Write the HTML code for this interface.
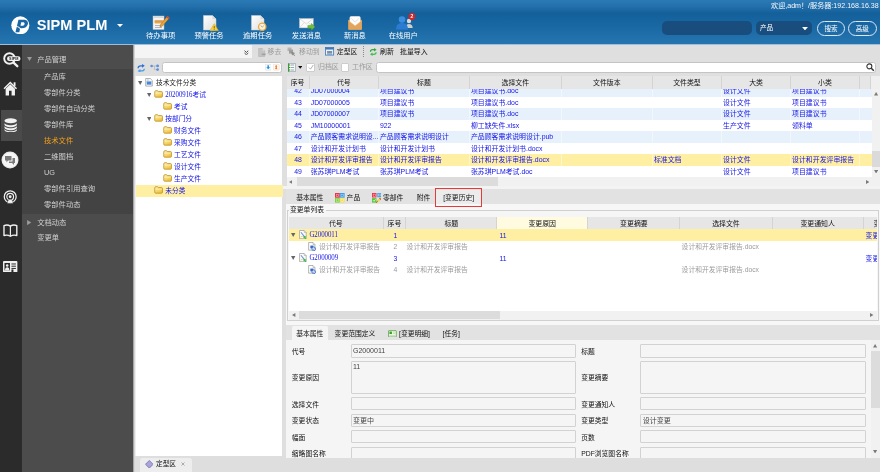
<!DOCTYPE html>
<html lang="zh-CN">
<head>
<meta charset="utf-8">
<title>SIPM PLM</title>
<style>
*{box-sizing:border-box;margin:0;padding:0}
html,body{width:880px;height:472px;overflow:hidden}
body{will-change:transform;position:relative;background:#dfdfdf;font-family:"Liberation Sans","Noto Sans CJK SC",sans-serif;font-size:6.5px;color:#222;line-height:1}
.abs{position:absolute}
a{text-decoration:none;color:inherit}
/* ---------- header ---------- */
#hdr{position:absolute;left:0;top:0;width:880px;height:44px;background:linear-gradient(#2b79b5 0%,#2370ac 14%,#13609b 30%,#1a68a3 60%,#2575b0 100%)}
#hdrline{position:absolute;left:0;top:44px;width:880px;height:1px;background:#9dbfdc}
#title{position:absolute;left:36.8px;top:17.8px;font-size:14.6px;font-weight:bold;color:#fff;letter-spacing:0;white-space:nowrap}
.tb{position:absolute;top:31.5px;width:48.5px;text-align:center;color:#fff;font-size:7.3px;white-space:nowrap}
.tbi{position:absolute;top:15px}
#welcome{position:absolute;right:1.3px;top:2.8px;color:#f4f8fc;font-size:7.1px;white-space:nowrap}
.pill{position:absolute;top:21.3px;height:14.2px;background:#194d7e;border-radius:5px}
.obtn{position:absolute;top:20.6px;height:15.4px;border:0.5px solid #dbe7f2;border-radius:8px;color:#fff;font-size:6.6px;text-align:center;line-height:14px}
/* ---------- sidebar ---------- */
#icol{position:absolute;left:0;top:45px;width:22px;height:427px;background:#2b2b2b}
#menu{position:absolute;left:22px;top:45px;width:111px;height:427px;background:#4c4c4c}
#sub{position:absolute;left:0;top:24px;width:111px;height:144.7px;background:#434343}
.mg{position:absolute;left:15.2px;color:#d0d0d0;font-size:7.3px;white-space:nowrap}
.mi{position:absolute;left:22px;color:#d0d0d0;font-size:7.3px;white-space:nowrap}
#shadow{position:absolute;left:133px;top:45px;width:2px;height:427px;background:linear-gradient(90deg,#8f8f8f,#ececec)}
/* ---------- tree panel ---------- */
#tp1{position:absolute;left:135px;top:45px;width:117px;height:13px;background:#f5f5f5}
.inp{position:absolute;background:#fff;border:0.6px solid #c4c4c4;border-radius:2.5px}
#tree{position:absolute;left:135.5px;top:75.8px;width:146.9px;height:380.6px;background:#fff;box-shadow:-0.5px 0 0 #fff}
.tn{position:absolute;white-space:nowrap;font-family:"Liberation Serif","Noto Sans CJK SC",serif;font-size:6.7px;color:#1010e8}
.tsel{position:absolute;left:0;width:147.4px;height:11.8px;background:#ffefa3}
#bbar{position:absolute;left:135px;top:456.4px;width:745px;height:15.6px;background:#dedede}
#btab{position:absolute;left:140px;top:458px;width:52px;height:14px;background:#ededed;border-radius:2.5px 2.5px 0 0}
/* ---------- toolbars ---------- */
.t1{position:absolute;top:49.3px;font-size:6.9px;white-space:nowrap;color:#111}
.dis{color:#9a9a9a}
/* ---------- grid 1 ---------- */
#g1{position:absolute;left:286.5px;top:76.3px;width:593.5px;height:110px;background:#fff;overflow:hidden}
.gh{position:absolute;z-index:3;top:0;height:12.4px;background:#e6e6e6;border-right:0.6px solid #d4d4d4;text-align:center;font-size:6.9px;line-height:14.2px;color:#111;white-space:nowrap;overflow:hidden}
.gr{position:absolute;left:0;width:585px;height:11.5px}
.gr.alt{background:#e7f1fc}
.gr.sel{background:#ffefa3}
.gc{position:absolute;top:0;height:11.5px;line-height:12.4px;font-size:6.9px;color:#1414e6;white-space:nowrap;overflow:hidden;padding-left:1px;border-right:0.5px solid rgba(255,255,255,.45)}
.sbv{position:absolute;background:#f1f1f1}
/* ---------- tabs / fieldset / grid2 / form ---------- */
#lightband{position:absolute;left:283px;top:186.3px;width:597px;height:2.4px;background:#f3f3f3}
#tabs1{position:absolute;left:286px;top:188.6px;width:594px;height:15.2px;background:#e2e2e2}
.tl{position:absolute;font-size:6.8px;white-space:nowrap;color:#111}
#fs{position:absolute;left:286px;top:203.8px;width:594px;height:121.4px;background:#f7f7f7}
#fsb{position:absolute;left:287px;top:210.4px;width:591.6px;height:110.4px;border:0.6px solid #d0d0d0;background:#f6f6f6}
#g2{position:absolute;left:289px;top:216.8px;width:588px;height:103px;background:#fff;overflow:hidden}
.g2c{position:absolute;font-size:6.8px;white-space:nowrap}
.ser{font-family:"Liberation Serif","Noto Sans CJK SC",serif;font-size:6.9px;letter-spacing:-0.04px;transform:scaleY(1.12);transform-origin:0 55%}
#tabs2{position:absolute;left:286px;top:325.2px;width:594px;height:15px;background:#e2e2e2}
#form{position:absolute;left:286px;top:340.2px;width:594px;height:117.6px;background:#f5f5f5;overflow:hidden}
.fl{position:absolute;font-size:6.8px;color:#111;white-space:nowrap}
.ff{position:absolute;background:#f5f5f5;border:0.7px solid #d2d2d2;border-radius:1px;font-size:7px;color:#444;padding:0 0 0 1.4px;white-space:nowrap}
</style>
</head>
<body>
<svg width="0" height="0" style="position:absolute"><defs><linearGradient id="fg" x1="0" y1="0" x2="0.6" y2="1"><stop offset="0" stop-color="#fff3b8"/><stop offset="1" stop-color="#efc23c"/></linearGradient></defs></svg>
<!-- HEADER -->
<div id="hdr"></div>
<div id="hdrline"></div>
<div id="title">SIPM PLM</div>
<!-- logo -->
<svg class="abs" style="left:11.4px;top:15.8px" width="18.6" height="18.6" viewBox="0 0 40 40">
<circle cx="20" cy="20" r="19.4" fill="#fff"/>
<path d="M16 8 H27 C34.5 8 37.5 12 36.4 17.4 C35.2 23.4 30 26.4 23 26.4 H19.8 L17.8 35 H9.6 Z M22 13.6 L20.4 20.8 H24 C27 20.8 28.8 19.2 29.2 17 C29.6 14.8 28.2 13.6 25.6 13.6 Z" fill="#1b66a4" fill-rule="evenodd"/>
<path d="M2 25 C8 20.5 15 21.5 21 27.5" stroke="#fff" stroke-width="2.2" fill="none"/>
</svg>
<svg class="abs" style="left:116.6px;top:24.3px" width="6" height="3.2" viewBox="0 0 12 6"><path d="M0 0H12L6 6Z" fill="#fff"/></svg>
<!-- toolbar: 待办事项 -->
<svg class="tbi" style="left:152px" width="18" height="15" viewBox="0 0 36 30">
<rect x="2" y="2" width="22" height="27" fill="#f4f4f4" stroke="#b9b9b9" stroke-width="1"/>
<rect x="2" y="2" width="22" height="4" fill="#d9d9d9"/>
<rect x="5" y="10" width="19" height="7" rx="2" fill="#f5a847"/>
<path d="M6 21H20M6 25H20M6 13.5H20" stroke="#9a9a9a" stroke-width="1.4"/>
<path d="M31 2 L35 6 L21 22 L16 24 L17.5 18.5 Z" fill="#e7a23a" stroke="#8a5a1a" stroke-width="0.8"/>
<path d="M31 2 L35 6 L33 8.3 L29 4.3Z" fill="#d8453a"/>
</svg>
<div class="tb" style="left:136.4px">待办事项</div>
<!-- 预警任务 -->
<svg class="tbi" style="left:202.5px;top:14.6px" width="16" height="16" viewBox="0 0 32 32">
<defs><linearGradient id="pg1" x1="0" y1="0" x2="1" y2="1"><stop offset="0" stop-color="#ffffff"/><stop offset="1" stop-color="#dedede"/></linearGradient></defs>
<path d="M1 1H19L26 8V30H1Z" fill="url(#pg1)" stroke="#cfcfcf" stroke-width="1"/>
<path d="M19 1V8H26Z" fill="#d8d8d8"/>
<path d="M22.5 17.5 L31 31.4 H14 Z" fill="#f8cf3a" stroke="#d2a21f" stroke-width="1"/>
<path d="M22.5 22V27M22.5 28.4V29.8" stroke="#6a5200" stroke-width="1.6"/>
</svg>
<div class="tb" style="left:184.8px">预警任务</div>
<!-- 逾期任务 -->
<svg class="tbi" style="left:251px;top:14.6px" width="16" height="16" viewBox="0 0 32 32">
<path d="M1 1H19L26 8V30H1Z" fill="url(#pg1)" stroke="#cfcfcf" stroke-width="1"/>
<path d="M19 1V8H26Z" fill="#d8d8d8"/>
<circle cx="22.5" cy="23.5" r="7.4" fill="#fbf3e2" stroke="#e7a83e" stroke-width="2.6"/>
<path d="M19.6 21L22.5 24.4L25.6 21.4" stroke="#a08a6a" stroke-width="1.5" fill="none"/>
</svg>
<div class="tb" style="left:233.4px">逾期任务</div>
<!-- 发送消息 -->
<svg class="tbi" style="left:298.8px;top:17.6px" width="16.2" height="12.4" viewBox="0 0 33 25">
<rect x="1" y="1" width="28" height="19" fill="#fbfbfb" stroke="#c4c4c4" stroke-width="1"/>
<path d="M1 1L15 12L29 1M1 20L11 9M29 20L19 9" stroke="#c4c4c4" stroke-width="1" fill="none"/>
<path d="M18 15H25V11L33 18L25 25V21H18Z" fill="#6fbf3b" stroke="#3f8a1c" stroke-width="0.8"/>
</svg>
<div class="tb" style="left:282.2px">发送消息</div>
<!-- 新消息 -->
<svg class="tbi" style="left:347.9px;top:16.2px" width="14.2" height="14" viewBox="0 0 30 30">
<rect x=".5" y="8" width="29" height="21.5" rx="1.5" fill="#c58a44"/>
<rect x="3.6" y=".6" width="22.8" height="22" rx="3.4" fill="#fdfdfd" stroke="#d9d9d9" stroke-width=".8"/>
<path d="M6.5 5L15 13L23.5 5" stroke="#d4d4d4" stroke-width="1.4" fill="none"/>
<path d="M.5 9.6L15 21L29.5 9.6V28C29.5 28.8 28.8 29.5 28 29.5H2C1.2 29.5 .5 28.8 .5 28Z" fill="#e2a55d"/>
<path d="M.5 9.6L15 21L29.5 9.6" stroke="#efc48e" stroke-width="1" fill="none"/>
</svg>
<div class="tb" style="left:330.6px">新消息</div>
<!-- 在线用户 -->
<svg class="tbi" style="left:395px;top:13px" width="20" height="17" viewBox="0 0 40 34">
<circle cx="28" cy="16" r="4.4" fill="#dcdcdc"/>
<path d="M21 30C21 24.5 24 22 28 22C32 22 35.4 24.5 35.4 30Z" fill="#cfcfcf"/>
<circle cx="14" cy="13" r="6.5" fill="#3c8de0"/>
<path d="M2 33C2 24 7 20 14 20C21 20 26 24 26 33Z" fill="#2a7bd4"/>
<circle cx="34" cy="7" r="6.8" fill="#e02020"/>
<text x="34" y="10.6" font-size="10" font-weight="bold" fill="#fff" text-anchor="middle" font-family="Liberation Sans, sans-serif">2</text>
</svg>
<div class="tb" style="left:379px">在线用户</div>
<!-- right side -->
<div id="welcome">欢迎,adm！/服务器:192.168.16.38</div>
<div class="pill" style="left:662.4px;width:90px"></div>
<div class="pill" style="left:756px;width:56.4px"></div>
<div class="abs" style="left:760px;top:25.2px;color:#fff;font-size:6.6px">产品</div>
<svg class="abs" style="left:802px;top:27px" width="6" height="3.4" viewBox="0 0 12 7"><path d="M0 0H12L6 7Z" fill="#fff"/></svg>
<div class="obtn" style="left:817px;width:28px">搜索</div>
<div class="obtn" style="left:848px;width:28.6px">高级</div>
<!-- SIDEBAR -->
<div id="icol">
<div class="abs" style="left:1px;top:65px;width:21px;height:30.5px;background:#4a4a4a"></div>
<!-- magnifier SIPM (center y 60 abs => 15 rel) -->
<svg class="abs" style="left:2.5px;top:6.5px" width="18" height="16" viewBox="0 0 36 32">
<circle cx="13" cy="13" r="10.6" fill="none" stroke="#f2f2f2" stroke-width="3.8"/>
<path d="M21 21.4L28.6 28.4" stroke="#f2f2f2" stroke-width="4.6" stroke-linecap="round"/>
<rect x="8" y="8.6" width="27" height="9.6" rx="4.8" fill="#f2f2f2"/>
<text x="21.5" y="16.3" font-size="7.6" font-weight="bold" fill="#2b2b2b" text-anchor="middle" font-family="Liberation Sans, sans-serif">SIPM</text>
</svg>
<!-- home: abs y 82-96 -->
<svg class="abs" style="left:3.3px;top:36.3px" width="14.6" height="15" viewBox="0 0 28 29">
<path d="M14 1L27 14L25 16L14 5L3 16L1 14Z" fill="#f2f2f2"/>
<path d="M5 15L14 6.4L23 15V28H16.5V19H11.5V28H5Z" fill="#f2f2f2"/>
<rect x="20.5" y="2.5" width="3.6" height="7" fill="#f2f2f2"/>
</svg>
<!-- database: abs y 118-132 -->
<svg class="abs" style="left:4.2px;top:73px" width="13.4" height="14.4" viewBox="0 0 27 29">
<ellipse cx="13.5" cy="5.5" rx="12.5" ry="5" fill="#f0f0f0"/>
<path d="M1 9.5C1 12 6 14.5 13.5 14.5C21 14.5 26 12 26 9.5V13C26 15.5 21 18.5 13.5 18.5C6 18.5 1 15.5 1 13Z" fill="#f0f0f0"/>
<path d="M1 15.5C1 18 6 20.5 13.5 20.5C21 20.5 26 18 26 15.5V19C26 21.5 21 24.5 13.5 24.5C6 24.5 1 21.5 1 19Z" fill="#f0f0f0"/>
<path d="M1 21.5C1 24 6 26.5 13.5 26.5C21 26.5 26 24 26 21.5V24C26 26.5 21 28.8 13.5 28.8C6 28.8 1 26.5 1 24Z" fill="#f0f0f0"/>
</svg>
<!-- chat: center abs (10.4,160) r 8.9 -->
<svg class="abs" style="left:1.4px;top:106px" width="18" height="18" viewBox="0 0 36 36">
<circle cx="18" cy="18" r="17" fill="#e9e9e9"/>
<circle cx="18" cy="18" r="14.6" fill="#f6f6f6"/>
<path d="M8 10H21V19H14L11 23V19H8Z" fill="#7a7a7a"/>
<path d="M23 14H28V24H26V28L22 24H16V21H23Z" fill="#7a7a7a"/>
</svg>
<!-- podcast: center abs (10.4,196) -->
<svg class="abs" style="left:3.2px;top:144.6px" width="14.4" height="14.4" viewBox="0 0 30 30">
<circle cx="15" cy="14" r="12.4" fill="none" stroke="#f0f0f0" stroke-width="2.6"/>
<circle cx="15" cy="14" r="7" fill="none" stroke="#f0f0f0" stroke-width="2.4"/>
<circle cx="15" cy="14" r="3" fill="#f0f0f0"/>
<path d="M9 28C9 22 11 19.5 15 19.5C19 19.5 21 22 21 28Z" fill="#f0f0f0" stroke="#2b2b2b" stroke-width="1"/>
</svg>
<!-- book: abs x3.3-17.8 y224.3-237.7 -->
<svg class="abs" style="left:3.2px;top:179px" width="14.8" height="13.6" viewBox="0 0 30 27">
<path d="M2 3C7 1 11 1.5 15 4C19 1.5 23 1 28 3V23C23 21.4 19 22 15 24.6C11 22 7 21.4 2 23Z" fill="none" stroke="#f0f0f0" stroke-width="2.8" stroke-linejoin="round"/>
<path d="M15 4V24.6" stroke="#f0f0f0" stroke-width="2.4"/>
</svg>
<!-- id card: abs x3.3-17.3 y261.2-272.3 -->
<svg class="abs" style="left:3.2px;top:216px" width="14.4" height="11.4" viewBox="0 0 29 23">
<rect x="0" y="0" width="29" height="23" rx="2" fill="#f0f0f0"/>
<rect x="3" y="4" width="11" height="15" fill="#2b2b2b"/>
<circle cx="8.5" cy="9" r="2.6" fill="#f0f0f0"/>
<path d="M4 19C4 14 6 12.5 8.5 12.5C11 12.5 13 14 13 19Z" fill="#f0f0f0"/>
<path d="M17 6H26M17 10.5H26M17 15H26" stroke="#2b2b2b" stroke-width="2"/>
<rect x="17" y="17" width="4" height="6" fill="#2b2b2b"/>
</svg>
</div>
<div id="menu"><div id="sub"></div>
<svg class="abs" style="left:4.6px;top:12.4px" width="5" height="4.2" viewBox="0 0 10 8"><path d="M0 0H10L5 8Z" fill="#9c9c9c"/></svg>
<div class="mg" style="top:10.6px">产品管理</div>
<div class="mi" style="top:28.4px">产品库</div>
<div class="mi" style="top:44.4px">零部件分类</div>
<div class="mi" style="top:60.4px">零部件自动分类</div>
<div class="mi" style="top:76.4px">零部件库</div>
<div class="mi" style="top:92.4px;color:#f3a01c">技术文件</div>
<div class="mi" style="top:108.4px">二维图档</div>
<div class="mi" style="top:124.4px">UG</div>
<div class="mi" style="top:140.4px">零部件引用查询</div>
<div class="mi" style="top:156.4px">零部件动态</div>
<svg class="abs" style="left:5.4px;top:175.2px" width="4.4" height="5.2" viewBox="0 0 8 10"><path d="M0 0L8 5L0 10Z" fill="#9c9c9c"/></svg>
<div class="mg" style="top:174px">文档动态</div>
<div class="mg" style="top:188.6px">变更单</div>
</div>
<div id="shadow"></div>
<!-- TREE PANEL -->
<div id="tp1"></div>
<svg class="abs" style="left:244.4px;top:49.8px" width="4.8" height="5.6" viewBox="0 0 9 10"><path d="M1 1L4.5 4.4L8 1M1 5.4L4.5 8.8L8 5.4" fill="none" stroke="#333" stroke-width="1.7"/></svg>
<svg class="abs" style="left:137.4px;top:63.6px" width="8.4" height="8.8" viewBox="0 0 16 17"><path d="M2 8C2 4.6 4 3.6 7 3.6H10.4" fill="none" stroke="#2f6fd8" stroke-width="2.4"/><path d="M9.6 0L15 3.6L9.6 7.2Z" fill="#2f6fd8"/><path d="M14 9C14 12.4 12 13.4 9 13.4H5.6" fill="none" stroke="#4f9be6" stroke-width="2.4"/><path d="M6.4 9.8L1 13.4L6.4 17Z" fill="#4f9be6"/></svg>
<svg class="abs" style="left:150.4px;top:63.8px" width="9.4" height="7.4" viewBox="0 0 19 15"><path d="M3 4H15M9 4V11.4H15" fill="none" stroke="#a8a8a8" stroke-width="1.2"/><circle cx="3.2" cy="4" r="2.6" fill="#5b8fe0"/><circle cx="15.4" cy="4" r="2.8" fill="#5b8fe0"/><circle cx="15.4" cy="11.4" r="2.8" fill="#5b8fe0"/></svg>
<div class="inp" style="left:162px;top:61.6px;width:120.4px;height:11.6px"></div>
<svg class="abs" style="left:264.6px;top:64.4px" width="6.4" height="6.4" viewBox="0 0 13 13"><rect x=".5" y=".5" width="12" height="12" rx="2" fill="#fff" stroke="#b9cde0"/><path d="M6.5 10.5L2.5 6.5H5V2.5H8V6.5H10.5Z" fill="#1f8fd6"/></svg>
<svg class="abs" style="left:273.4px;top:64.4px" width="6.4" height="6.4" viewBox="0 0 13 13"><rect x=".5" y=".5" width="12" height="12" rx="2" fill="#fff" stroke="#e0c9b9"/><path d="M6.5 1.8L9.6 5H7.8V8H9.6L6.5 11.2L3.4 8H5.2V5H3.4Z" fill="#f47a20"/></svg>
<div id="tree">
<div class="tsel" style="top:109.37px"></div>
<svg class="abs" style="left:2.2px;top:5.10px" width="4.4" height="4" viewBox="0 0 9 8"><path d="M0 0H9L4.5 8Z" fill="#666"/></svg><svg class="abs" style="left:9.6px;top:2.70px" width="8" height="8.6" viewBox="0 0 15 17"><path d="M1 1H10L14 5V16H1Z" fill="#fff" stroke="#8a8a8a" stroke-width="1.3"/><rect x="3.2" y="6.6" width="8.8" height="6.8" fill="#4a86d8" stroke="#9fc0ea" stroke-width=".8"/><path d="M3.4 4H8" stroke="#8f8f8f" stroke-width="1.2"/></svg><div class="tn" style="left:20.5px;top:4.40px;color:#222">技术文件分类</div>
<svg class="abs" style="left:11.2px;top:17.13px" width="4.4" height="4" viewBox="0 0 9 8"><path d="M0 0H9L4.5 8Z" fill="#666"/></svg><svg class="abs" style="left:18.4px;top:14.43px" width="9.1" height="7.8" viewBox="0 0 18 16"><path d="M1.2 4C1.2 2.6 2 1.4 3.4 1.4H6.6C7.6 1.4 8 2 8.6 3.2H15.2C16.4 3.2 17 4 17 5V13C17 14.2 16.2 14.8 15.2 14.8H3C1.8 14.8 1.2 14 1.2 13Z" fill="url(#fg)" stroke="#b98a1a" stroke-width="1.5"/><path d="M2.6 6.6H15.6" stroke="#fff4c4" stroke-width="1.3"/></svg><div class="tn" style="left:29.8px;top:16.43px"><span class="ser" style="display:inline-block;font-size:6.8px;letter-spacing:0">20200916</span>考试</div>
<svg class="abs" style="left:27.3px;top:26.46px" width="9.1" height="7.8" viewBox="0 0 18 16"><path d="M1.2 4C1.2 2.6 2 1.4 3.4 1.4H6.6C7.6 1.4 8 2 8.6 3.2H15.2C16.4 3.2 17 4 17 5V13C17 14.2 16.2 14.8 15.2 14.8H3C1.8 14.8 1.2 14 1.2 13Z" fill="url(#fg)" stroke="#b98a1a" stroke-width="1.5"/><path d="M2.6 6.6H15.6" stroke="#fff4c4" stroke-width="1.3"/></svg><div class="tn" style="left:38.6px;top:28.46px">考试</div>
<svg class="abs" style="left:11.2px;top:41.19px" width="4.4" height="4" viewBox="0 0 9 8"><path d="M0 0H9L4.5 8Z" fill="#666"/></svg><svg class="abs" style="left:18.4px;top:38.49px" width="9.1" height="7.8" viewBox="0 0 18 16"><path d="M1.2 4C1.2 2.6 2 1.4 3.4 1.4H6.6C7.6 1.4 8 2 8.6 3.2H15.2C16.4 3.2 17 4 17 5V13C17 14.2 16.2 14.8 15.2 14.8H3C1.8 14.8 1.2 14 1.2 13Z" fill="url(#fg)" stroke="#b98a1a" stroke-width="1.5"/><path d="M2.6 6.6H15.6" stroke="#fff4c4" stroke-width="1.3"/></svg><div class="tn" style="left:29.8px;top:40.49px">按部门分</div>
<svg class="abs" style="left:27.3px;top:50.52px" width="9.1" height="7.8" viewBox="0 0 18 16"><path d="M1.2 4C1.2 2.6 2 1.4 3.4 1.4H6.6C7.6 1.4 8 2 8.6 3.2H15.2C16.4 3.2 17 4 17 5V13C17 14.2 16.2 14.8 15.2 14.8H3C1.8 14.8 1.2 14 1.2 13Z" fill="url(#fg)" stroke="#b98a1a" stroke-width="1.5"/><path d="M2.6 6.6H15.6" stroke="#fff4c4" stroke-width="1.3"/></svg><div class="tn" style="left:38.6px;top:52.52px">财务文件</div>
<svg class="abs" style="left:27.3px;top:62.55px" width="9.1" height="7.8" viewBox="0 0 18 16"><path d="M1.2 4C1.2 2.6 2 1.4 3.4 1.4H6.6C7.6 1.4 8 2 8.6 3.2H15.2C16.4 3.2 17 4 17 5V13C17 14.2 16.2 14.8 15.2 14.8H3C1.8 14.8 1.2 14 1.2 13Z" fill="url(#fg)" stroke="#b98a1a" stroke-width="1.5"/><path d="M2.6 6.6H15.6" stroke="#fff4c4" stroke-width="1.3"/></svg><div class="tn" style="left:38.6px;top:64.55px">采购文件</div>
<svg class="abs" style="left:27.3px;top:74.58px" width="9.1" height="7.8" viewBox="0 0 18 16"><path d="M1.2 4C1.2 2.6 2 1.4 3.4 1.4H6.6C7.6 1.4 8 2 8.6 3.2H15.2C16.4 3.2 17 4 17 5V13C17 14.2 16.2 14.8 15.2 14.8H3C1.8 14.8 1.2 14 1.2 13Z" fill="url(#fg)" stroke="#b98a1a" stroke-width="1.5"/><path d="M2.6 6.6H15.6" stroke="#fff4c4" stroke-width="1.3"/></svg><div class="tn" style="left:38.6px;top:76.58px">工艺文件</div>
<svg class="abs" style="left:27.3px;top:86.61px" width="9.1" height="7.8" viewBox="0 0 18 16"><path d="M1.2 4C1.2 2.6 2 1.4 3.4 1.4H6.6C7.6 1.4 8 2 8.6 3.2H15.2C16.4 3.2 17 4 17 5V13C17 14.2 16.2 14.8 15.2 14.8H3C1.8 14.8 1.2 14 1.2 13Z" fill="url(#fg)" stroke="#b98a1a" stroke-width="1.5"/><path d="M2.6 6.6H15.6" stroke="#fff4c4" stroke-width="1.3"/></svg><div class="tn" style="left:38.6px;top:88.61px">设计文件</div>
<svg class="abs" style="left:27.3px;top:98.64px" width="9.1" height="7.8" viewBox="0 0 18 16"><path d="M1.2 4C1.2 2.6 2 1.4 3.4 1.4H6.6C7.6 1.4 8 2 8.6 3.2H15.2C16.4 3.2 17 4 17 5V13C17 14.2 16.2 14.8 15.2 14.8H3C1.8 14.8 1.2 14 1.2 13Z" fill="url(#fg)" stroke="#b98a1a" stroke-width="1.5"/><path d="M2.6 6.6H15.6" stroke="#fff4c4" stroke-width="1.3"/></svg><div class="tn" style="left:38.6px;top:100.64px">生产文件</div>
<svg class="abs" style="left:18.4px;top:110.67px" width="9.1" height="7.8" viewBox="0 0 18 16"><path d="M1.2 4C1.2 2.6 2 1.4 3.4 1.4H6.6C7.6 1.4 8 2 8.6 3.2H15.2C16.4 3.2 17 4 17 5V13C17 14.2 16.2 14.8 15.2 14.8H3C1.8 14.8 1.2 14 1.2 13Z" fill="url(#fg)" stroke="#b98a1a" stroke-width="1.5"/><path d="M2.6 6.6H15.6" stroke="#fff4c4" stroke-width="1.3"/></svg><div class="tn" style="left:29.8px;top:112.67px">未分类</div>
</div>
<div id="bbar"></div>
<div id="btab"></div>
<svg class="abs" style="left:144.8px;top:459.8px" width="8.6" height="8.6" viewBox="0 0 15 15"><path d="M7.5 0.8L14.2 7.5L7.5 14.2L0.8 7.5Z" fill="#a9a4e0" stroke="#5d5990" stroke-width="1.1"/></svg>
<div class="abs" style="left:156px;top:461px;font-size:6.7px;color:#111">定型区</div>
<svg class="abs" style="left:180.6px;top:462.4px" width="4" height="4" viewBox="0 0 8 8"><path d="M1 1L7 7M7 1L1 7" stroke="#9a9a9a" stroke-width="1.6"/></svg>
<!-- RIGHT TOOLBARS -->
<svg class="abs" style="left:258px;top:48px" width="7.8" height="9" viewBox="0 0 15 18"><path d="M1 1H9L13 5V17H1Z" fill="#c4c4c4" stroke="#adadad" stroke-width="1"/><path d="M9 1V5H13Z" fill="#e2e2e2"/><rect x="7" y="11" width="8" height="3.4" fill="#a2a2a2"/></svg>
<div class="t1 dis" style="left:267.6px">移去</div>
<svg class="abs" style="left:287.2px;top:47.2px" width="8.6" height="9.2" viewBox="0 0 17 18"><path d="M1 1H9V8H1Z" fill="#b4b4b4"/><path d="M4 5H12L12 13H4Z" fill="#9f9f9f"/><path d="M8 9L16 12L13.4 13.6L16 16.6L14.4 17.6L12 14.6L10 16.6Z" fill="#8a8a8a"/></svg>
<div class="t1 dis" style="left:299px">移动到</div>
<svg class="abs" style="left:325.4px;top:47.4px" width="9.2" height="8.6" viewBox="0 0 18 17"><rect x="1" y="1" width="16" height="15" fill="#eaf2fb" stroke="#3e78b8" stroke-width="1.6"/><rect x="1" y="1" width="16" height="4" fill="#3e78b8"/><rect x="4" y="8" width="10" height="5" fill="#7d8ea3"/><path d="M4 14.5H14" stroke="#3e78b8" stroke-width="1"/></svg>
<div class="t1" style="left:336.8px">定型区</div>
<div class="abs" style="left:363.4px;top:46.4px;width:0;height:10.4px;border-left:0.8px dotted #8a8a8a"></div>
<svg class="abs" style="left:369px;top:48.2px" width="8.6" height="8" viewBox="0 0 16 17"><path d="M2 8C2 4.6 4 3.6 7 3.6H10.4" fill="none" stroke="#2aa83a" stroke-width="2.5"/><path d="M9.6 0L15 3.6L9.6 7.2Z" fill="#2aa83a"/><path d="M14 9C14 12.4 12 13.4 9 13.4H5.6" fill="none" stroke="#3fc04c" stroke-width="2.5"/><path d="M6.4 9.8L1 13.4L6.4 17Z" fill="#3fc04c"/></svg>
<div class="t1" style="left:380px">刷新</div>
<div class="t1" style="left:400px">批量导入</div>
<!-- row 2 -->
<svg class="abs" style="left:288px;top:63.2px" width="7.6" height="9" viewBox="0 0 15 18"><rect x=".6" y=".6" width="13.8" height="16.8" fill="#fffbe8" stroke="#7f9ac0" stroke-width="1.2"/><path d="M1 1V17" stroke="#3a9a3a" stroke-width="2.4"/><path d="M5 4H12M5 9H12M5 14H12" stroke="#6f8fc0" stroke-width="1.6"/><path d="M2 4H4M2 9H4M2 14H4" stroke="#2e8a2e" stroke-width="2"/></svg>
<svg class="abs" style="left:298px;top:66.4px" width="4.4" height="2.8" viewBox="0 0 9 6"><path d="M0 0H9L4.5 6Z" fill="#111"/></svg>
<div class="abs" style="left:306.3px;top:63.3px;width:8.4px;height:8.6px;background:#fff;border:0.6px solid #cdcdcd;border-radius:1px"></div>
<svg class="abs" style="left:307.6px;top:64.4px" width="6.2" height="6.4" viewBox="0 0 11 11"><path d="M1.5 6L4.5 9L9.5 1.5" fill="none" stroke="#a8a8a8" stroke-width="1.6"/></svg>
<div class="t1 dis" style="left:318px;top:64.3px">归档区</div>
<div class="abs" style="left:340.6px;top:63.3px;width:8.4px;height:8.6px;background:#fff;border:0.6px solid #cdcdcd;border-radius:1px"></div>
<div class="t1 dis" style="left:352px;top:64.3px">工作区</div>
<div class="inp" style="left:376px;top:61.8px;width:500.4px;height:11.4px"></div>
<svg class="abs" style="left:866.4px;top:63.4px" width="8.4" height="8.4" viewBox="0 0 14 14"><circle cx="5.6" cy="5.6" r="4.2" fill="none" stroke="#333" stroke-width="1.8"/><path d="M8.8 8.8L13 13" stroke="#333" stroke-width="2.4"/></svg>
<!-- GRID 1 -->
<div id="g1">
<div class="abs" style="left:0;top:0;width:594px;height:12.4px;background:#efefef;z-index:2"></div>
<div class="gh" style="left:0px;width:23.2px">序号</div>
<div class="gh" style="left:23.2px;width:69.2px">代号</div>
<div class="gh" style="left:92.4px;width:91.0px">标题</div>
<div class="gh" style="left:183.4px;width:91.8px">选择文件</div>
<div class="gh" style="left:275.2px;width:91.2px">文件版本</div>
<div class="gh" style="left:366.4px;width:69.2px">文件类型</div>
<div class="gh" style="left:435.6px;width:69.0px">大类</div>
<div class="gh" style="left:504.6px;width:68.8px">小类</div>
<div class="gh" style="left:573.4px;width:11.6px"></div>
<div class="gr alt" style="top:8.90px"><div class="gc" style="left:1px;width:22.2px;text-align:center;padding-left:0">42</div><div class="gc" style="left:23.2px;width:69.2px">JD07000004</div><div class="gc" style="left:92.4px;width:91.0px">项目建议书</div><div class="gc" style="left:183.4px;width:91.8px">项目建议书.doc</div><div class="gc" style="left:275.2px;width:91.2px"></div><div class="gc" style="left:366.4px;width:69.2px"></div><div class="gc" style="left:435.6px;width:69.0px">设计文件</div><div class="gc" style="left:504.6px;width:68.8px">项目建议书</div></div>
<div class="gr" style="top:20.40px"><div class="gc" style="left:1px;width:22.2px;text-align:center;padding-left:0">43</div><div class="gc" style="left:23.2px;width:69.2px">JD07000005</div><div class="gc" style="left:92.4px;width:91.0px">项目建议书</div><div class="gc" style="left:183.4px;width:91.8px">项目建议书.doc</div><div class="gc" style="left:275.2px;width:91.2px"></div><div class="gc" style="left:366.4px;width:69.2px"></div><div class="gc" style="left:435.6px;width:69.0px">设计文件</div><div class="gc" style="left:504.6px;width:68.8px">项目建议书</div></div>
<div class="gr alt" style="top:31.90px"><div class="gc" style="left:1px;width:22.2px;text-align:center;padding-left:0">44</div><div class="gc" style="left:23.2px;width:69.2px">JD07000007</div><div class="gc" style="left:92.4px;width:91.0px">项目建议书</div><div class="gc" style="left:183.4px;width:91.8px">项目建议书.doc</div><div class="gc" style="left:275.2px;width:91.2px"></div><div class="gc" style="left:366.4px;width:69.2px"></div><div class="gc" style="left:435.6px;width:69.0px">设计文件</div><div class="gc" style="left:504.6px;width:68.8px">项目建议书</div></div>
<div class="gr" style="top:43.40px"><div class="gc" style="left:1px;width:22.2px;text-align:center;padding-left:0">45</div><div class="gc" style="left:23.2px;width:69.2px">JM10000001</div><div class="gc" style="left:92.4px;width:91.0px">922</div><div class="gc" style="left:183.4px;width:91.8px">柳工缺失件.xlsx</div><div class="gc" style="left:275.2px;width:91.2px"></div><div class="gc" style="left:366.4px;width:69.2px"></div><div class="gc" style="left:435.6px;width:69.0px">生产文件</div><div class="gc" style="left:504.6px;width:68.8px">领料单</div></div>
<div class="gr alt" style="top:54.90px"><div class="gc" style="left:1px;width:22.2px;text-align:center;padding-left:0">46</div><div class="gc" style="left:23.2px;width:69.2px">产品顾客需求说明设...</div><div class="gc" style="left:92.4px;width:91.0px">产品顾客需求说明设计</div><div class="gc" style="left:183.4px;width:91.8px">产品顾客需求说明设计.pub</div><div class="gc" style="left:275.2px;width:91.2px"></div><div class="gc" style="left:366.4px;width:69.2px"></div><div class="gc" style="left:435.6px;width:69.0px"></div><div class="gc" style="left:504.6px;width:68.8px"></div></div>
<div class="gr" style="top:66.40px"><div class="gc" style="left:1px;width:22.2px;text-align:center;padding-left:0">47</div><div class="gc" style="left:23.2px;width:69.2px">设计和开发计划书</div><div class="gc" style="left:92.4px;width:91.0px">设计和开发计划书</div><div class="gc" style="left:183.4px;width:91.8px">设计和开发计划书.docx</div><div class="gc" style="left:275.2px;width:91.2px"></div><div class="gc" style="left:366.4px;width:69.2px"></div><div class="gc" style="left:435.6px;width:69.0px"></div><div class="gc" style="left:504.6px;width:68.8px"></div></div>
<div class="gr alt sel" style="top:77.90px"><div class="gc" style="left:1px;width:22.2px;text-align:center;padding-left:0">48</div><div class="gc" style="left:23.2px;width:69.2px">设计和开发评审报告</div><div class="gc" style="left:92.4px;width:91.0px">设计和开发评审报告</div><div class="gc" style="left:183.4px;width:91.8px">设计和开发评审报告.docx</div><div class="gc" style="left:275.2px;width:91.2px"></div><div class="gc" style="left:366.4px;width:69.2px">标准文档</div><div class="gc" style="left:435.6px;width:69.0px">设计文件</div><div class="gc" style="left:504.6px;width:68.8px">设计和开发评审报告</div></div>
<div class="gr" style="top:89.40px"><div class="gc" style="left:1px;width:22.2px;text-align:center;padding-left:0">49</div><div class="gc" style="left:23.2px;width:69.2px">张苏琪PLM考试</div><div class="gc" style="left:92.4px;width:91.0px">张苏琪PLM考试</div><div class="gc" style="left:183.4px;width:91.8px">张苏琪PLM考试.doc</div><div class="gc" style="left:275.2px;width:91.2px"></div><div class="gc" style="left:366.4px;width:69.2px"></div><div class="gc" style="left:435.6px;width:69.0px">设计文件</div><div class="gc" style="left:504.6px;width:68.8px">项目建议书</div></div>
<div class="sbv" style="left:585px;top:12.4px;width:9px;height:88.4px"></div>
<svg class="abs" style="left:587.4px;top:16px" width="4.2" height="3.6" viewBox="0 0 8 7"><path d="M4 0L8 7H0Z" fill="#7a7a7a"/></svg>
<div class="abs" style="left:585.4px;top:74.4px;width:8.6px;height:16px;background:#dadada"></div>
<svg class="abs" style="left:587.4px;top:93.4px" width="4.2" height="3.6" viewBox="0 0 8 7"><path d="M4 7L8 0H0Z" fill="#7a7a7a"/></svg>
<div class="abs" style="left:0;top:100.8px;width:594px;height:9.2px;background:#f1f1f1"></div>
<svg class="abs" style="left:2.6px;top:103.6px" width="3.4" height="4" viewBox="0 0 7 8"><path d="M0 4L7 0V8Z" fill="#7a7a7a"/></svg>
<svg class="abs" style="left:579px;top:103.6px" width="3.4" height="4" viewBox="0 0 7 8"><path d="M7 4L0 0V8Z" fill="#7a7a7a"/></svg>
<div class="abs" style="left:10px;top:101.2px;width:201px;height:8.4px;background:#dcdcdc"></div>
</div>
<!-- TABS 1 -->
<div id="lightband"></div>
<div id="tabs1"></div>
<div class="tl" style="left:296.2px;top:194.6px">基本属性</div>
<svg class="abs" style="left:335px;top:193px" width="9.6" height="9.6" viewBox="0 0 18 18"><rect x="0" y="0" width="9" height="9" fill="#e8324c"/><rect x="9" y="0" width="9" height="9" fill="#3b9be8"/><rect x="0" y="9" width="9" height="9" fill="#7bd03e"/><rect x="9" y="9" width="9" height="9" fill="#f0df5a"/><g fill="none" stroke="#fff" stroke-opacity=".55" stroke-width="1.2"><rect x="2.4" y="2.4" width="4.4" height="4.4"/><rect x="11.2" y="2.4" width="4.4" height="4.4"/><rect x="2.4" y="11.2" width="4.4" height="4.4"/><rect x="11.2" y="11.2" width="4.4" height="4.4"/></g></svg>
<div class="tl" style="left:346.6px;top:194.6px">产品</div>
<svg class="abs" style="left:371.8px;top:193px" width="9.6" height="9.6" viewBox="0 0 18 18"><rect x="0" y="0" width="8.4" height="8.4" fill="#e8324c"/><rect x="10" y="0" width="8" height="8" fill="#3b9be8"/><rect x="0" y="9.6" width="8.4" height="8.4" fill="#5fc43a"/><g fill="none" stroke="#fff" stroke-opacity=".6" stroke-width="1.1"><rect x="2.2" y="2.2" width="4" height="4"/><rect x="12" y="2" width="4" height="3.4"/></g><path d="M2 13.6L3.8 15.6L6.6 12" stroke="#fff" stroke-width="1.4" fill="none"/><path d="M8.6 17.4L16.8 9.4" stroke="#f2d94a" stroke-width="3.4"/><path d="M14 9.6L17.6 13" stroke="#e24a3a" stroke-width="2"/><path d="M7.6 18L10.6 15.4" stroke="#444" stroke-width="1.6"/></svg>
<div class="tl" style="left:383px;top:194.6px">零部件</div>
<div class="tl" style="left:416.8px;top:194.6px">附件</div>
<div class="abs" style="left:436.4px;top:189.6px;width:44.4px;height:16px;background:#ececec;border-radius:1.5px 1.5px 0 0"></div>
<div class="tl" style="left:443.2px;top:194.6px">[变更历史]</div>
<div class="abs" style="left:435.2px;top:188.3px;width:46.8px;height:18.6px;border:1.5px solid #e53a35;z-index:5"></div>
<!-- FIELDSET -->
<div id="fs"></div>
<div id="fsb"></div>
<div class="abs" style="left:288.6px;top:206.6px;width:37.4px;height:8px;background:#f7f7f7"></div>
<div class="tl" style="left:290px;top:207.2px">变更单列表</div>
<!-- GRID 2 -->
<div id="g2">
<div class="gh" style="left:0px;width:94.6px">代号</div>
<div class="gh" style="left:94.6px;width:22.8px">序号</div>
<div class="gh" style="left:117.4px;width:90.8px">标题</div>
<div class="gh" style="left:208px;width:91.4px;background:#fffbe0">变更原因</div>
<div class="gh" style="left:299.4px;width:92.0px">变更摘要</div>
<div class="gh" style="left:391.4px;width:92.2px">选择文件</div>
<div class="gh" style="left:483.6px;width:91.2px">变更通知人</div>
<div class="gh" style="left:574.8px;width:65.2px;text-align:left;padding-left:9.6px">变更</div>
<div class="abs" style="left:0;top:12.2px;width:588px;height:11.8px;background:#ffefa3"></div>
<svg class="abs" style="left:2.4px;top:16.40px" width="4.4" height="4" viewBox="0 0 9 8"><path d="M0 0H9L4.5 8Z" fill="#666"/></svg><svg class="abs" style="left:10.2px;top:13.30px" width="7.8" height="9.2" viewBox="0 0 15 18"><path d="M1 1H10L14 5V17H1Z" fill="#fdfdfd" stroke="#8a8a8a" stroke-width="1.2"/><path d="M10 1V5H14" fill="#e4e4e4" stroke="#8a8a8a" stroke-width=".8"/><path d="M3.6 4.4L10 12.6" stroke="#6a94dc" stroke-width="2.2"/><path d="M2.6 14.6L5.6 11.2L7.4 13Z" fill="#f0c63a"/><path d="M9 11.4L14.6 13L12.6 14.4L14 17L11.4 17.6L10.6 15.2L8.6 16Z" fill="#35b548"/></svg><div class="g2c ser" style="left:20.4px;top:15.60px;color:#1414e6">G2000011</div><div class="g2c" style="left:104.6px;top:15.80px;color:#1414e6">1</div><div class="g2c" style="left:210.6px;top:15.80px;color:#1414e6">11</div><div class="g2c" style="left:576.6px;top:15.80px;color:#1414e6">变更</div>
<svg class="abs" style="left:19.4px;top:25.05px" width="8.4" height="9.2" viewBox="0 0 16 18"><path d="M1 1H9.6L13.4 5V16H1Z" fill="#fdfdfd" stroke="#8a8a8a" stroke-width="1.2"/><path d="M9.6 1V5H13.4" fill="#e4e4e4" stroke="#8a8a8a" stroke-width=".8"/><rect x="4.4" y="7" width="6" height="5.4" fill="#3568c8"/><circle cx="11" cy="13.4" r="3.6" fill="#eaf1fc" stroke="#2f5fc0" stroke-width="1.5"/><path d="M9.4 13.4L10.6 14.6L12.6 12.2" stroke="#2f5fc0" stroke-width="1.1" fill="none"/></svg><div class="g2c" style="left:30px;top:27.35px;color:#9b9b9b">设计和开发评审报告</div><div class="g2c" style="left:104.6px;top:27.35px;color:#9b9b9b">2</div><div class="g2c" style="left:117.6px;top:27.35px;color:#9b9b9b">设计和开发评审报告</div><div class="g2c" style="left:392.6px;top:27.35px;color:#9b9b9b">设计和开发评审报告.docx</div>
<svg class="abs" style="left:2.4px;top:39.50px" width="4.4" height="4" viewBox="0 0 9 8"><path d="M0 0H9L4.5 8Z" fill="#666"/></svg><svg class="abs" style="left:10.2px;top:36.40px" width="7.8" height="9.2" viewBox="0 0 15 18"><path d="M1 1H10L14 5V17H1Z" fill="#fdfdfd" stroke="#8a8a8a" stroke-width="1.2"/><path d="M10 1V5H14" fill="#e4e4e4" stroke="#8a8a8a" stroke-width=".8"/><path d="M3.6 4.4L10 12.6" stroke="#6a94dc" stroke-width="2.2"/><path d="M2.6 14.6L5.6 11.2L7.4 13Z" fill="#f0c63a"/><path d="M9 11.4L14.6 13L12.6 14.4L14 17L11.4 17.6L10.6 15.2L8.6 16Z" fill="#35b548"/></svg><div class="g2c ser" style="left:20.4px;top:38.70px;color:#1414e6">G2000009</div><div class="g2c" style="left:104.6px;top:38.90px;color:#1414e6">3</div><div class="g2c" style="left:210.6px;top:38.90px;color:#1414e6">11</div><div class="g2c" style="left:576.6px;top:38.90px;color:#1414e6">变更</div>
<svg class="abs" style="left:19.4px;top:48.15px" width="8.4" height="9.2" viewBox="0 0 16 18"><path d="M1 1H9.6L13.4 5V16H1Z" fill="#fdfdfd" stroke="#8a8a8a" stroke-width="1.2"/><path d="M9.6 1V5H13.4" fill="#e4e4e4" stroke="#8a8a8a" stroke-width=".8"/><rect x="4.4" y="7" width="6" height="5.4" fill="#3568c8"/><circle cx="11" cy="13.4" r="3.6" fill="#eaf1fc" stroke="#2f5fc0" stroke-width="1.5"/><path d="M9.4 13.4L10.6 14.6L12.6 12.2" stroke="#2f5fc0" stroke-width="1.1" fill="none"/></svg><div class="g2c" style="left:30px;top:50.45px;color:#9b9b9b">设计和开发评审报告</div><div class="g2c" style="left:104.6px;top:50.45px;color:#9b9b9b">4</div><div class="g2c" style="left:117.6px;top:50.45px;color:#9b9b9b">设计和开发评审报告</div><div class="g2c" style="left:392.6px;top:50.45px;color:#9b9b9b">设计和开发评审报告.docx</div>
<div class="abs" style="left:0;top:94.2px;width:588px;height:8.6px;background:#f1f1f1"></div>
<svg class="abs" style="left:3.4px;top:96.6px" width="3.4" height="4" viewBox="0 0 7 8"><path d="M0 4L7 0V8Z" fill="#7a7a7a"/></svg>
<svg class="abs" style="left:581.4px;top:96.6px" width="3.4" height="4" viewBox="0 0 7 8"><path d="M7 4L0 0V8Z" fill="#7a7a7a"/></svg>
<div class="abs" style="left:9.6px;top:94.6px;width:201.6px;height:8px;background:#dcdcdc"></div>
</div>
<!-- TABS 2 -->
<div id="tabs2"></div>
<div class="abs" style="left:291.8px;top:326.4px;width:36.4px;height:14px;background:#f5f5f5;border-radius:1.5px 1.5px 0 0"></div>
<div class="tl" style="left:296.2px;top:330.6px">基本属性</div>
<div class="tl" style="left:334.6px;top:330.6px">变更范围定义</div>
<svg class="abs" style="left:388.4px;top:329.6px" width="8.8" height="7.6" viewBox="0 0 18 15"><rect x="1" y="1" width="16" height="13" rx="1" fill="#eef8e6" stroke="#3f9a2c" stroke-width="1.4"/><rect x="3" y="3" width="5" height="5" fill="#3f9a2c"/><path d="M10 4H15M10 7H15M3 11H15" stroke="#9fca8f" stroke-width="1"/></svg>
<div class="tl" style="left:399px;top:330.6px">[变更明细]</div>
<div class="tl" style="left:442.6px;top:330.6px">[任务]</div>
<!-- FORM -->
<div id="form">
<div class="fl" style="left:5.8px;top:8.80px">代号</div><div class="ff" style="left:64.6px;top:4.30px;width:225.0px;height:13.2px;line-height:12px">G2000011</div><div class="fl" style="left:295.2px;top:8.80px">标题</div><div class="ff" style="left:354.3px;top:4.30px;width:225.5px;height:13.2px;line-height:12px"></div>
<div class="fl" style="left:5.8px;top:35.00px">变更原因</div><div class="ff" style="left:64.6px;top:20.70px;width:225.0px;height:32.8px;line-height:10.6px">11</div><div class="fl" style="left:295.2px;top:35.00px">变更摘要</div><div class="ff" style="left:354.3px;top:20.70px;width:225.5px;height:32.8px;line-height:10.6px"></div>
<div class="fl" style="left:5.8px;top:61.60px">选择文件</div><div class="ff" style="left:64.6px;top:57.10px;width:225.0px;height:13.2px;line-height:12px"></div><div class="fl" style="left:295.2px;top:61.60px">变更通知人</div><div class="ff" style="left:354.3px;top:57.10px;width:225.5px;height:13.2px;line-height:12px"></div>
<div class="fl" style="left:5.8px;top:78.10px">变更状态</div><div class="ff" style="left:64.6px;top:73.60px;width:225.0px;height:13.2px;line-height:12px">变更中</div><div class="fl" style="left:295.2px;top:78.10px">变更类型</div><div class="ff" style="left:354.3px;top:73.60px;width:225.5px;height:13.2px;line-height:12px">设计变更</div>
<div class="fl" style="left:5.8px;top:94.50px">幅面</div><div class="ff" style="left:64.6px;top:90.00px;width:225.0px;height:13.2px;line-height:12px"></div><div class="fl" style="left:295.2px;top:94.50px">页数</div><div class="ff" style="left:354.3px;top:90.00px;width:225.5px;height:13.2px;line-height:12px"></div>
<div class="fl" style="left:5.8px;top:111.00px">缩略图名称</div><div class="ff" style="left:64.6px;top:106.50px;width:225.0px;height:13.2px;line-height:12px"></div><div class="fl" style="left:295.2px;top:111.00px">PDF浏览图名称</div><div class="ff" style="left:354.3px;top:106.50px;width:225.5px;height:13.2px;line-height:12px"></div>
<div class="abs" style="left:585px;top:0;width:9px;height:117.6px;background:#f1f1f1"></div>
<svg class="abs" style="left:587.4px;top:4.2px" width="4.2" height="3.6" viewBox="0 0 8 7"><path d="M4 0L8 7H0Z" fill="#7a7a7a"/></svg>
<div class="abs" style="left:585.4px;top:10.8px;width:8.6px;height:56.8px;background:#dcdcdc"></div>
<svg class="abs" style="left:587.4px;top:109.6px" width="4.2" height="3.6" viewBox="0 0 8 7"><path d="M4 7L8 0H0Z" fill="#7a7a7a"/></svg>
</div>
</body>
</html>
